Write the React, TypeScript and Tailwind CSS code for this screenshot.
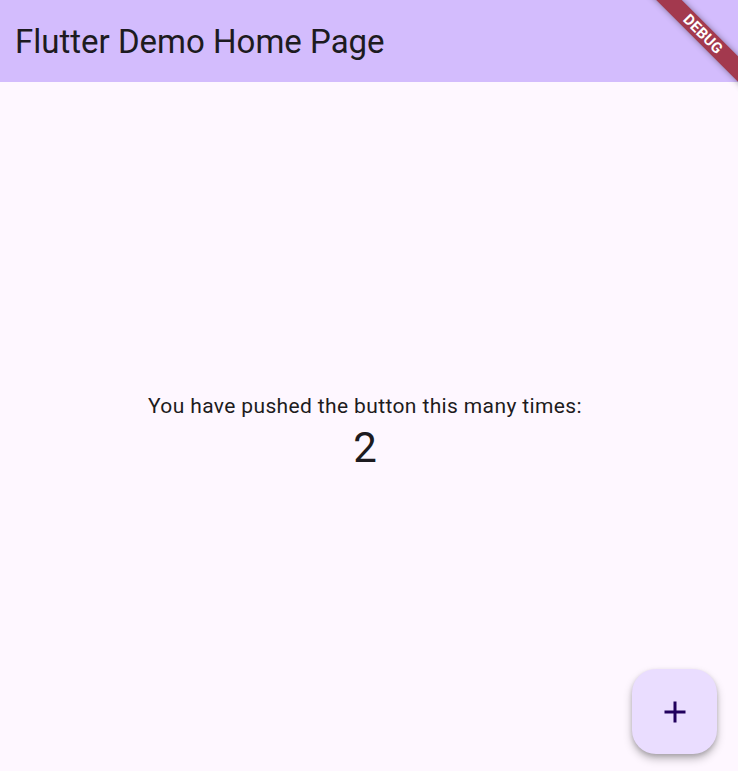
import React from 'react';

export default function App() {
    const count = 2;

    return (
        <div className="relative flex h-[771px] w-full flex-col overflow-hidden bg-[#fef7ff] text-[#1d1b20]" style={{ fontFamily: 'Roboto, "Noto Sans", sans-serif' }}>
            <header className="flex h-[82px] shrink-0 items-center bg-[#d3bcfd] pl-[15px]">
                <h1 className="text-[33px] font-normal leading-none">Flutter Demo Home Page</h1>
            </header>

            <main className="flex flex-1 flex-col items-center justify-center pr-[8px] pt-[10px]">
                <p className="text-[21px] leading-[32px] tracking-[0.37px]">You have pushed the button this many times:</p>
                <p className="text-[42px] leading-[52px]">{count}</p>
            </main>

            <button className="absolute bottom-[17px] right-[21px] flex h-[85px] w-[85px] items-center justify-center rounded-[24px] bg-[#eaddff] text-[#21005d] shadow-[0_5px_8px_rgba(0,0,0,0.25),0_2px_4px_rgba(0,0,0,0.15)]">
                <svg width="36" height="36" viewBox="0 0 24 24" fill="currentColor">
                    <path d="M19 13h-6v6h-2v-6H5v-2h6V5h2v6h6v2z" />
                </svg>
            </button>

            {/* debug banner */}
            <div className="absolute left-[603px] top-[25px] flex h-[18px] w-[200px] rotate-45 items-center justify-center bg-[#a3394e] shadow-[0_0_6px_rgba(0,0,0,0.4)]">
                <span className="text-[15px] font-bold leading-none tracking-[0.2px] text-white">DEBUG</span>
            </div>
        </div>
    );
}
